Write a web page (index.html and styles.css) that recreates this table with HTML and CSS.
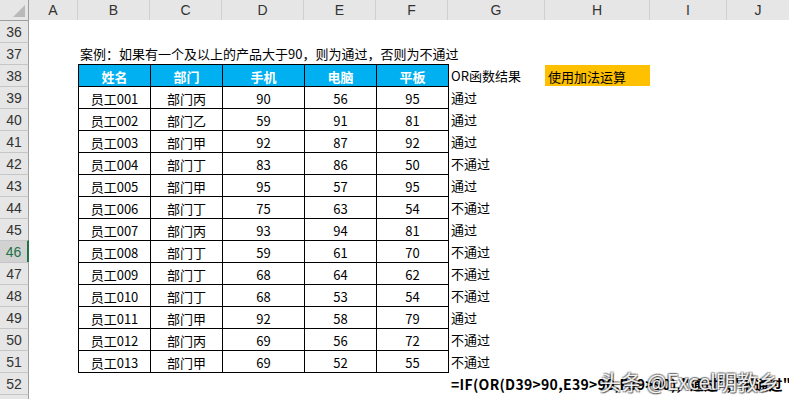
FILE: index.html
```html
<!DOCTYPE html>
<html lang="zh">
<head>
<meta charset="utf-8">
<title>OR函数</title>
<link rel="stylesheet" href="styles.css">
</head>
<body>
<div class="sheet">
  <div class="row colhead">
    <div class="corner"><span class="tri"></span></div>
    <div class="ch">A</div><div class="ch">B</div><div class="ch">C</div><div class="ch">D</div><div class="ch">E</div><div class="ch">F</div><div class="ch">G</div><div class="ch">H</div><div class="ch">I</div><div class="ch last">J</div>
  </div>

  <div class="row first"><div class="rh">36</div></div>
  <div class="row"><div class="rh">37</div><div class="cell cB note">案例：如果有一个及以上的产品大于90，则为通过，否则为不通过</div></div>
  <div class="row"><div class="rh">38</div>
    <div class="cell t th cB">姓名</div><div class="cell t th cC">部门</div><div class="cell t th cD">手机</div><div class="cell t th cE">电脑</div><div class="cell t th cF">平板</div>
    <div class="cell cG">OR函数结果</div><div class="cell cH hl">使用加法运算</div>
  </div>
  <div class="row"><div class="rh">39</div><div class="cell t cB">员工001</div><div class="cell t cC">部门丙</div><div class="cell t cD">90</div><div class="cell t cE">56</div><div class="cell t cF">95</div><div class="cell cG">通过</div></div>
  <div class="row"><div class="rh">40</div><div class="cell t cB">员工002</div><div class="cell t cC">部门乙</div><div class="cell t cD">59</div><div class="cell t cE">91</div><div class="cell t cF">81</div><div class="cell cG">通过</div></div>
  <div class="row"><div class="rh">41</div><div class="cell t cB">员工003</div><div class="cell t cC">部门甲</div><div class="cell t cD">92</div><div class="cell t cE">87</div><div class="cell t cF">92</div><div class="cell cG">通过</div></div>
  <div class="row"><div class="rh">42</div><div class="cell t cB">员工004</div><div class="cell t cC">部门丁</div><div class="cell t cD">83</div><div class="cell t cE">86</div><div class="cell t cF">50</div><div class="cell cG">不通过</div></div>
  <div class="row"><div class="rh">43</div><div class="cell t cB">员工005</div><div class="cell t cC">部门甲</div><div class="cell t cD">95</div><div class="cell t cE">57</div><div class="cell t cF">95</div><div class="cell cG">通过</div></div>
  <div class="row"><div class="rh">44</div><div class="cell t cB">员工006</div><div class="cell t cC">部门丁</div><div class="cell t cD">75</div><div class="cell t cE">63</div><div class="cell t cF">54</div><div class="cell cG">不通过</div></div>
  <div class="row"><div class="rh">45</div><div class="cell t cB">员工007</div><div class="cell t cC">部门丙</div><div class="cell t cD">93</div><div class="cell t cE">94</div><div class="cell t cF">81</div><div class="cell cG">通过</div></div>
  <div class="row"><div class="rh sel">46</div><div class="cell t cB">员工008</div><div class="cell t cC">部门丁</div><div class="cell t cD">59</div><div class="cell t cE">61</div><div class="cell t cF">70</div><div class="cell cG">不通过</div></div>
  <div class="row"><div class="rh">47</div><div class="cell t cB">员工009</div><div class="cell t cC">部门丁</div><div class="cell t cD">68</div><div class="cell t cE">64</div><div class="cell t cF">62</div><div class="cell cG">不通过</div></div>
  <div class="row"><div class="rh">48</div><div class="cell t cB">员工010</div><div class="cell t cC">部门丁</div><div class="cell t cD">68</div><div class="cell t cE">53</div><div class="cell t cF">54</div><div class="cell cG">不通过</div></div>
  <div class="row"><div class="rh">49</div><div class="cell t cB">员工011</div><div class="cell t cC">部门甲</div><div class="cell t cD">92</div><div class="cell t cE">58</div><div class="cell t cF">79</div><div class="cell cG">通过</div></div>
  <div class="row"><div class="rh">50</div><div class="cell t cB">员工012</div><div class="cell t cC">部门丙</div><div class="cell t cD">69</div><div class="cell t cE">56</div><div class="cell t cF">72</div><div class="cell cG">不通过</div></div>
  <div class="row lastrow"><div class="rh">51</div><div class="cell t cB">员工013</div><div class="cell t cC">部门甲</div><div class="cell t cD">69</div><div class="cell t cE">52</div><div class="cell t cF">55</div><div class="cell cG">不通过</div></div>
  <div class="row"><div class="rh">52</div><div class="cell cG formula">=IF(OR(D39&gt;90,E39&gt;90,F39&gt;90),"通过","不通过")</div></div>
  <div class="row"><div class="rh"></div></div>

  <div class="watermark">头条 @Excel明教乡</div>
</div>
</body>
</html>
```

FILE: styles.css
```css
html, body {
  margin: 0;
  padding: 0;
  background: #fff;
}
body {
  width: 789px;
  height: 399px;
  overflow: hidden;
  font-family: "Noto Sans CJK SC", "Noto Sans", sans-serif;
  font-size: 13px;
  color: #000;
}
.sheet {
  position: relative;
  width: 789px;
}
.row {
  display: grid;
  grid-template-columns: 29px 49px 72px 72px 82px 72px 72px 97px 105px 77px 62px;
  height: 22px;
}
.colhead {
  height: 20px;
  background: #e6e6e6;
}
.corner {
  position: relative;
  border-right: 1px solid #9e9e9e;
}
.tri {
  position: absolute;
  right: 3px;
  bottom: 3px;
  width: 0;
  height: 0;
  border-left: 12px solid transparent;
  border-bottom: 12px solid #b9b9b9;
}
.ch {
  display: flex;
  align-items: center;
  justify-content: center;
  font-family: "Liberation Sans", "Noto Sans", sans-serif;
  font-size: 14px;
  color: #333;
  border-right: 1px solid #cfcfcf;
}
.ch.last { border-right: none; }
.rh {
  display: flex;
  align-items: center;
  justify-content: center;
  background: #e6e6e6;
  border-top: 1px solid #c6c6c6;
  border-right: 1px solid #9e9e9e;
  font-family: "Liberation Sans", "Noto Sans", sans-serif;
  font-size: 14px;
  color: #333;
}
.first .rh { border-top-color: #9e9e9e; }
.rh.sel {
  background: #d2d2d2;
  color: #217346;
  border-right: 2px solid #217346;
}
.cell {
  display: flex;
  align-items: center;
  white-space: nowrap;
  padding-top: 1px;
}
.cB { grid-column: 3; }
.cC { grid-column: 4; }
.cD { grid-column: 5; }
.cE { grid-column: 6; }
.cF { grid-column: 7; }
.cG { grid-column: 8; padding-left: 3px; }
.cH { grid-column: 9; }
.note {
  padding-left: 2px;
  overflow: visible;
}
.t {
  justify-content: center;
  border-top: 1px solid #000;
  border-left: 1px solid #000;
}
.t.cF { box-shadow: 1px 0 0 #000; }
.lastrow .t { box-shadow: 0 1px 0 #000; }
.lastrow .t.cF { box-shadow: 1px 0 0 #000, 0 1px 0 #000, 1px 1px 0 #000; }
.th {
  background: #00b0f0;
  color: #fff;
  font-weight: bold;
}
.hl {
  background: #ffc000;
  border-top: 1px solid #fff;
  padding-left: 3px;
}
.formula {
  font-weight: bold;
  font-size: 14px;
  letter-spacing: 0.3px;
  padding-left: 3px;
  overflow: visible;
}
.watermark {
  position: absolute;
  left: 600px;
  top: 368px;
  font-family: "Noto Sans CJK SC", sans-serif;
  font-size: 21px;
  line-height: 26px;
  white-space: nowrap;
  color: rgba(255, 255, 255, 0.92);
  text-shadow: 1px 1px 1px rgba(0, 0, 0, 0.55), -1px -1px 1px rgba(0, 0, 0, 0.35), 1px -1px 1px rgba(0,0,0,0.35), -1px 1px 1px rgba(0,0,0,0.35);
}
```
